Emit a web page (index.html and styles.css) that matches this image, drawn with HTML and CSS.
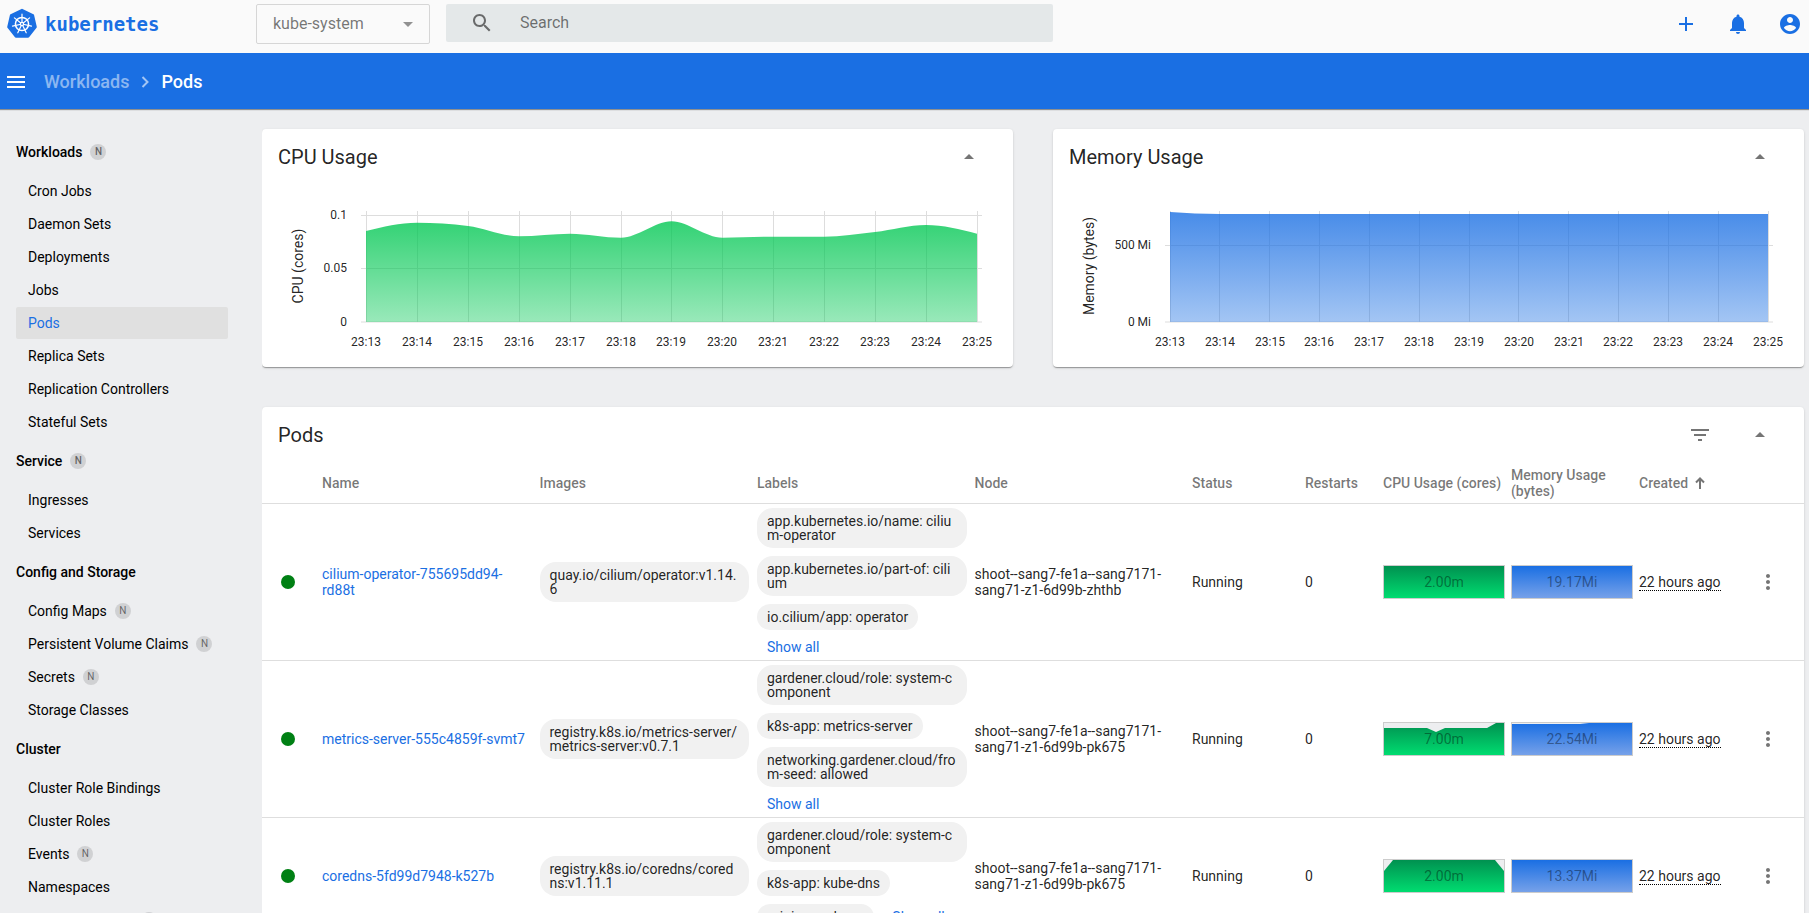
FILE: index.html
```html
<!DOCTYPE html>
<html lang="en">

<head>
    <meta charset="UTF-8">
    <meta name="viewport" content="width=device-width, initial-scale=1.0">
    <title>Kubernetes Dashboard</title>
    <link rel="stylesheet" href="styles.css">
</head>

<body>
    <header class="topbar">
        <a href="#" class="logo">
            <svg width="32" height="32" viewBox="0 0 32 32">
                <path d="M16 2L26.9 7.3L29.6 19.1L22.1 28.6H9.9L2.4 19.1L5.1 7.3Z" fill="#1a6fe3" stroke="#1a6fe3" stroke-width="2.4" stroke-linejoin="round" />
                <circle cx="16" cy="16" r="6.6" fill="none" stroke="#fff" stroke-width="1.5" />
                <path d="M16 16V6.2M16 16L23.6 9.9M16 16L25.5 18.2M16 16L20.2 24.8M16 16L11.8 24.8M16 16L6.5 18.2M16 16L8.4 9.9" stroke="#fff" stroke-width="1.2" stroke-linecap="round" />
                <circle cx="16" cy="16" r="2.2" fill="#fff" />
                <circle cx="16" cy="16" r="0.9" fill="#1a6fe3" />
            </svg>
            <span class="logo-text">kubernetes</span>
        </a>
        <div class="namespace">
            <select class="namespace-select" aria-label="Namespace">
                <option>kube-system</option>
            </select>
            <svg class="namespace-arrow" width="10" height="5" viewBox="0 0 10 5"><path d="M0 0h10L5 5z" /></svg>
        </div>
        <form class="search">
            <svg class="icon" viewBox="0 0 24 24"><path d="M15.5 14h-.79l-.28-.27C15.41 12.59 16 11.11 16 9.5 16 5.91 13.09 3 9.5 3S3 5.91 3 9.5 5.91 16 9.5 16c1.61 0 3.09-.59 4.23-1.57l.27.28v.79l5 4.99L20.49 19l-4.99-5zm-6 0C7.01 14 5 11.99 5 9.5S7.01 5 9.5 5 14 7.01 14 9.5 11.99 14 9.5 14z" /></svg>
            <input type="text" class="search-input" placeholder="Search" aria-label="Search">
        </form>
        <div class="actions">
            <button class="icon-btn" aria-label="Create">
                <svg class="icon" viewBox="0 0 24 24"><path d="M19 13h-6v6h-2v-6H5v-2h6V5h2v6h6v2z" /></svg>
            </button>
            <button class="icon-btn" aria-label="Notifications">
                <svg class="icon" viewBox="0 0 24 24"><path d="M12 22c1.1 0 2-.9 2-2h-4c0 1.1.89 2 2 2zm6-6v-5c0-3.07-1.64-5.64-4.5-6.32V4c0-.83-.67-1.5-1.5-1.5s-1.5.67-1.5 1.5v.68C7.63 5.36 6 7.92 6 11v5l-2 2v1h16v-1l-2-2z" /></svg>
            </button>
            <button class="icon-btn" aria-label="Account">
                <svg class="icon" viewBox="0 0 24 24"><path d="M12 2C6.48 2 2 6.48 2 12s4.48 10 10 10 10-4.48 10-10S17.52 2 12 2zm0 3c1.66 0 3 1.34 3 3s-1.34 3-3 3-3-1.34-3-3 1.34-3 3-3zm0 14.2c-2.5 0-4.71-1.28-6-3.22.03-1.99 4-3.08 6-3.08 1.99 0 5.97 1.09 6 3.08-1.29 1.94-3.5 3.22-6 3.22z" /></svg>
            </button>
        </div>
    </header>

    <nav class="breadcrumbs">
        <button class="menu-btn" aria-label="Toggle menu">
            <svg class="icon" viewBox="0 0 24 24"><path d="M3 18h18v-2H3v2zm0-5h18v-2H3v2zm0-7v2h18V6H3z" /></svg>
        </button>
        <a href="#" class="crumb">Workloads</a>
        <svg class="crumb-arrow" width="8" height="12" viewBox="0 0 8 12"><path d="M1.5 1l5 5-5 5" /></svg>
        <span class="crumb-current">Pods</span>
    </nav>

    <div class="layout">
        <nav class="sidebar">
            <a href="#" class="nav-group">Workloads <span class="badge">N</span></a>
            <a href="#" class="nav-item">Cron Jobs</a>
            <a href="#" class="nav-item">Daemon Sets</a>
            <a href="#" class="nav-item">Deployments</a>
            <a href="#" class="nav-item">Jobs</a>
            <a href="#" class="nav-item active">Pods</a>
            <a href="#" class="nav-item">Replica Sets</a>
            <a href="#" class="nav-item">Replication Controllers</a>
            <a href="#" class="nav-item">Stateful Sets</a>
            <a href="#" class="nav-group">Service <span class="badge">N</span></a>
            <a href="#" class="nav-item">Ingresses</a>
            <a href="#" class="nav-item">Services</a>
            <a href="#" class="nav-group">Config and Storage</a>
            <a href="#" class="nav-item">Config Maps <span class="badge">N</span></a>
            <a href="#" class="nav-item">Persistent Volume Claims <span class="badge">N</span></a>
            <a href="#" class="nav-item">Secrets <span class="badge">N</span></a>
            <a href="#" class="nav-item">Storage Classes</a>
            <a href="#" class="nav-group">Cluster</a>
            <a href="#" class="nav-item">Cluster Role Bindings</a>
            <a href="#" class="nav-item">Cluster Roles</a>
            <a href="#" class="nav-item">Events <span class="badge">N</span></a>
            <a href="#" class="nav-item">Namespaces</a>
            <a href="#" class="nav-item">Network Policies <span class="badge">N</span></a>
        </nav>

        <main class="content">
            <div class="graphs">
                <section class="card">
                    <div class="card-header">
                        <h2>CPU Usage</h2>
                        <button class="card-btn" aria-label="Collapse">
                            <svg class="icon" viewBox="0 0 24 24"><path d="M7 14l5-5 5 5z" /></svg>
                        </button>
                    </div>
                    <svg class="graph" viewBox="0 0 751 182">
                        <defs>
                            <linearGradient id="cpu-fill" x1="0" y1="0" x2="0" y2="1">
                                <stop offset="0" stop-color="#00c752" stop-opacity="0.8" />
                                <stop offset="1" stop-color="#00c752" stop-opacity="0.4" />
                            </linearGradient>
                        </defs>
                        <path class="grid-line" d="M99 30.5H720M99 83.5H720M99 137H720" />
                        <path class="grid-line" d="M104.5 26V137M155.5 26V137M206.5 26V137M257.5 26V137M308.5 26V137M359.5 26V137M409.5 26V137M460.5 26V137M511.5 26V137M562.5 26V137M613.5 26V137M664.5 26V137M715.5 26V137" />
                        <path fill="url(#cpu-fill)" d="M104 46C121 41.9 138 37.7 155 37.7C172 37.7 189 38.8 206 41C223 43.2 240 51.3 257 51.3C274 51.3 291 48.7 308 48.7C325 48.7 342 52.7 359 52.7C376 52.7 393 36.3 409.5 36.3C426 36.3 443 52.7 460.5 52.7C477 52.7 494 51.7 511 51.7H562C579 51.7 596 49 613 47C630 45 647 40 664 40C681 40 698 44.4 715 48.7V137H104Z" />
                        <text class="axis-title" transform="translate(41 81) rotate(-90)">CPU (cores)</text>
                        <g class="tick-y">
                            <text x="85" y="34">0.1</text>
                            <text x="85" y="87">0.05</text>
                            <text x="85" y="141">0</text>
                        </g>
                        <g class="tick-x">
                            <text x="104" y="161">23:13</text>
                            <text x="155" y="161">23:14</text>
                            <text x="206" y="161">23:15</text>
                            <text x="257" y="161">23:16</text>
                            <text x="308" y="161">23:17</text>
                            <text x="359" y="161">23:18</text>
                            <text x="409" y="161">23:19</text>
                            <text x="460" y="161">23:20</text>
                            <text x="511" y="161">23:21</text>
                            <text x="562" y="161">23:22</text>
                            <text x="613" y="161">23:23</text>
                            <text x="664" y="161">23:24</text>
                            <text x="715" y="161">23:25</text>
                        </g>
                    </svg>
                </section>

                <section class="card">
                    <div class="card-header">
                        <h2>Memory Usage</h2>
                        <button class="card-btn" aria-label="Collapse">
                            <svg class="icon" viewBox="0 0 24 24"><path d="M7 14l5-5 5 5z" /></svg>
                        </button>
                    </div>
                    <svg class="graph" viewBox="0 0 751 182">
                        <defs>
                            <linearGradient id="mem-fill" x1="0" y1="0" x2="0" y2="1">
                                <stop offset="0" stop-color="#1a6fe3" stop-opacity="0.8" />
                                <stop offset="1" stop-color="#1a6fe3" stop-opacity="0.4" />
                            </linearGradient>
                        </defs>
                        <path class="grid-line" d="M112 60.5H720M112 137H720" />
                        <path class="grid-line" d="M117.5 26V137M166.5 26V137M216.5 26V137M266.5 26V137M316.5 26V137M366.5 26V137M416.5 26V137M465.5 26V137M515.5 26V137M565.5 26V137M615.5 26V137M665.5 26V137M715.5 26V137" />
                        <path fill="url(#mem-fill)" d="M117 27C134 28 150 29 167 29H715V137H117Z" />
                        <text class="axis-title" transform="translate(41 81) rotate(-90)">Memory (bytes)</text>
                        <g class="tick-y">
                            <text x="98" y="64">500 Mi</text>
                            <text x="98" y="141">0 Mi</text>
                        </g>
                        <g class="tick-x">
                            <text x="117" y="161">23:13</text>
                            <text x="167" y="161">23:14</text>
                            <text x="217" y="161">23:15</text>
                            <text x="266" y="161">23:16</text>
                            <text x="316" y="161">23:17</text>
                            <text x="366" y="161">23:18</text>
                            <text x="416" y="161">23:19</text>
                            <text x="466" y="161">23:20</text>
                            <text x="516" y="161">23:21</text>
                            <text x="565" y="161">23:22</text>
                            <text x="615" y="161">23:23</text>
                            <text x="665" y="161">23:24</text>
                            <text x="715" y="161">23:25</text>
                        </g>
                    </svg>
                </section>
            </div>

            <section class="card">
                <div class="card-header">
                    <h2>Pods</h2>
                    <button class="card-btn filter-btn" aria-label="Filter">
                        <svg class="icon" viewBox="0 0 24 24"><path d="M10 18h4v-2h-4v2zM3 6v2h18V6H3zm3 7h12v-2H6v2z" /></svg>
                    </button>
                    <button class="card-btn" aria-label="Collapse">
                        <svg class="icon" viewBox="0 0 24 24"><path d="M7 14l5-5 5 5z" /></svg>
                    </button>
                </div>
                <table class="pods">
                    <colgroup>
                        <col class="col-state">
                        <col>
                        <col>
                        <col>
                        <col>
                        <col class="col-status">
                        <col class="col-restarts">
                        <col class="col-usage">
                        <col class="col-usage">
                        <col class="col-created">
                        <col class="col-menu">
                    </colgroup>
                    <thead>
                        <tr>
                            <th></th>
                            <th>Name</th>
                            <th>Images</th>
                            <th>Labels</th>
                            <th>Node</th>
                            <th>Status</th>
                            <th>Restarts</th>
                            <th>CPU Usage (cores)</th>
                            <th>Memory Usage (bytes)</th>
                            <th>
                                <span class="sorted">Created
                                    <svg width="10" height="12" viewBox="0 0 10 12"><path d="M5 12V1.5M1 5.5l4-4 4 4" /></svg>
                                </span>
                            </th>
                            <th></th>
                        </tr>
                    </thead>
                    <tbody>
                        <tr>
                            <td><span class="dot"></span></td>
                            <td><a href="#">cilium-operator-755695dd94-rd88t</a></td>
                            <td class="chip-cell"><div class="chips"><span class="chip">quay.io/cilium/operator:v1.14.6</span></div></td>
                            <td class="chip-cell">
                                <div class="chips">
                                    <span class="chip">app.kubernetes.io/name: cilium-operator</span>
                                    <span class="chip">app.kubernetes.io/part-of: cilium</span>
                                    <span class="chip">io.cilium/app: operator</span>
                                    <a href="#" class="show-all">Show all</a>
                                </div>
                            </td>
                            <td>shoot--sang7-fe1a--sang7171-sang71-z1-6d99b-zhthb</td>
                            <td>Running</td>
                            <td>0</td>
                            <td>
                                <div class="spark">
                                    <svg viewBox="0 0 120 32" preserveAspectRatio="none">
                                        <!-- gradients shared by all the sparklines -->
                                        <defs>
                                            <linearGradient id="spark-cpu" gradientUnits="userSpaceOnUse" x1="0" y1="0" x2="0" y2="32">
                                                <stop offset="0" stop-color="#009150" />
                                                <stop offset="1" stop-color="#00dc70" />
                                            </linearGradient>
                                            <linearGradient id="spark-mem" gradientUnits="userSpaceOnUse" x1="0" y1="0" x2="0" y2="32">
                                                <stop offset="0" stop-color="#1a6fe3" />
                                                <stop offset="1" stop-color="#76a1e9" />
                                            </linearGradient>
                                        </defs>
                                        <path fill="url(#spark-cpu)" d="M0 0H120V32H0Z" />
                                    </svg>
                                    <span class="spark-value">2.00m</span>
                                </div>
                            </td>
                            <td>
                                <div class="spark">
                                    <svg viewBox="0 0 120 32" preserveAspectRatio="none"><path fill="url(#spark-mem)" d="M0 0H120V32H0Z" /></svg>
                                    <span class="spark-value">19.17Mi</span>
                                </div>
                            </td>
                            <td><span class="age">22 hours ago</span></td>
                            <td>
                                <button class="row-menu" aria-label="Pod actions">
                                    <svg class="icon" viewBox="0 0 24 24"><path d="M12 8c1.1 0 2-.9 2-2s-.9-2-2-2-2 .9-2 2 .9 2 2 2zm0 2c-1.1 0-2 .9-2 2s.9 2 2 2 2-.9 2-2-.9-2-2-2zm0 6c-1.1 0-2 .9-2 2s.9 2 2 2 2-.9 2-2-.9-2-2-2z" /></svg>
                                </button>
                            </td>
                        </tr>
                        <tr>
                            <td><span class="dot"></span></td>
                            <td><a href="#">metrics-server-555c4859f-svmt7</a></td>
                            <td class="chip-cell"><div class="chips"><span class="chip">registry.k8s.io/metrics-server/metrics-server:v0.7.1</span></div></td>
                            <td class="chip-cell">
                                <div class="chips">
                                    <span class="chip">gardener.cloud/role: system-component</span>
                                    <span class="chip">k8s-app: metrics-server</span>
                                    <span class="chip">networking.gardener.cloud/from-seed: allowed</span>
                                    <a href="#" class="show-all">Show all</a>
                                </div>
                            </td>
                            <td>shoot--sang7-fe1a--sang7171-sang71-z1-6d99b-pk675</td>
                            <td>Running</td>
                            <td>0</td>
                            <td>
                                <div class="spark">
                                    <svg viewBox="0 0 120 32" preserveAspectRatio="none"><path fill="url(#spark-cpu)" d="M0 5H43L52 9L61 5H103L112 0H120V32H0Z" /></svg>
                                    <span class="spark-value">7.00m</span>
                                </div>
                            </td>
                            <td>
                                <div class="spark">
                                    <svg viewBox="0 0 120 32" preserveAspectRatio="none"><path fill="url(#spark-mem)" d="M0 1H68L77 0H120V32H0Z" /></svg>
                                    <span class="spark-value">22.54Mi</span>
                                </div>
                            </td>
                            <td><span class="age">22 hours ago</span></td>
                            <td>
                                <button class="row-menu" aria-label="Pod actions">
                                    <svg class="icon" viewBox="0 0 24 24"><path d="M12 8c1.1 0 2-.9 2-2s-.9-2-2-2-2 .9-2 2 .9 2 2 2zm0 2c-1.1 0-2 .9-2 2s.9 2 2 2 2-.9 2-2-.9-2-2-2zm0 6c-1.1 0-2 .9-2 2s.9 2 2 2 2-.9 2-2-.9-2-2-2z" /></svg>
                                </button>
                            </td>
                        </tr>
                        <tr>
                            <td><span class="dot"></span></td>
                            <td><a href="#">coredns-5fd99d7948-k527b</a></td>
                            <td class="chip-cell"><div class="chips"><span class="chip">registry.k8s.io/coredns/coredns:v1.11.1</span></div></td>
                            <td class="chip-cell">
                                <div class="chips">
                                    <span class="chip">gardener.cloud/role: system-component</span>
                                    <span class="chip">k8s-app: kube-dns</span>
                                    <span class="chip">origin: gardener</span>
                                    <a href="#" class="show-all">Show all</a>
                                </div>
                            </td>
                            <td>shoot--sang7-fe1a--sang7171-sang71-z1-6d99b-pk675</td>
                            <td>Running</td>
                            <td>0</td>
                            <td>
                                <div class="spark">
                                    <svg viewBox="0 0 120 32" preserveAspectRatio="none"><path fill="url(#spark-cpu)" d="M0 11L9 0H111L120 11V32H0Z" /></svg>
                                    <span class="spark-value">2.00m</span>
                                </div>
                            </td>
                            <td>
                                <div class="spark">
                                    <svg viewBox="0 0 120 32" preserveAspectRatio="none"><path fill="url(#spark-mem)" d="M0 0H120V32H0Z" /></svg>
                                    <span class="spark-value">13.37Mi</span>
                                </div>
                            </td>
                            <td><span class="age">22 hours ago</span></td>
                            <td>
                                <button class="row-menu" aria-label="Pod actions">
                                    <svg class="icon" viewBox="0 0 24 24"><path d="M12 8c1.1 0 2-.9 2-2s-.9-2-2-2-2 .9-2 2 .9 2 2 2zm0 2c-1.1 0-2 .9-2 2s.9 2 2 2 2-.9 2-2-.9-2-2-2zm0 6c-1.1 0-2 .9-2 2s.9 2 2 2 2-.9 2-2-.9-2-2-2z" /></svg>
                                </button>
                            </td>
                        </tr>
                    </tbody>
                </table>
            </section>
        </main>
    </div>
</body>

</html>
```
FILE: styles.css
```css
* {
    box-sizing: border-box;
}

body {
    font-family: Roboto, "Liberation Sans", sans-serif;
    font-size: 14px;
    line-height: 16px;
    color: rgba(0, 0, 0, 0.87);
    background-color: #edeef0;
    margin: 0;
    height: 100vh;
    display: flex;
    flex-direction: column;
    overflow: hidden;
}

a {
    color: #1a6fe3;
    text-decoration: none;
}

button {
    display: flex;
    align-items: center;
    justify-content: center;
    background: none;
    border: none;
    padding: 0;
    color: inherit;
    cursor: pointer;
}

.icon {
    width: 24px;
    height: 24px;
    fill: currentColor;
    flex-shrink: 0;
}

/* Top bar */
.topbar {
    display: flex;
    align-items: center;
    flex-shrink: 0;
    height: 53px;
    padding: 0 7px 6px 6px;
    background-color: #fafafa;
}

.logo {
    display: flex;
    align-items: center;
    gap: 7px;
    width: 250px;
}

.logo-text {
    font-family: "DejaVu Sans Mono", monospace;
    font-size: 19px;
    font-weight: bold;
    line-height: 24px;
}

.namespace {
    position: relative;
}

.namespace-select {
    appearance: none;
    width: 174px;
    height: 40px;
    padding: 0 40px 0 16px;
    border: 1px solid #d6d6d6;
    border-radius: 2px;
    background-color: transparent;
    color: rgba(0, 0, 0, 0.54);
    font-family: inherit;
    font-size: 16px;
}

.namespace-arrow {
    position: absolute;
    right: 17px;
    top: 18px;
    fill: rgba(0, 0, 0, 0.42);
    pointer-events: none;
}

.search {
    display: flex;
    align-items: center;
    gap: 26px;
    width: 607px;
    height: 38px;
    margin: 0 0 2px 16px;
    padding-left: 24px;
    border-radius: 2px;
    background-color: #e4e8e9;
    color: rgba(0, 0, 0, 0.54);
}

.search-input {
    flex: 1;
    border: none;
    outline: none;
    padding: 0;
    background: none;
    font-family: inherit;
    font-size: 16px;
}

.search-input::placeholder {
    color: rgba(0, 0, 0, 0.54);
}

.actions {
    display: flex;
    gap: 28px;
    margin-left: auto;
    color: #1a6fe3;
}

/* Breadcrumbs */
.breadcrumbs {
    display: flex;
    align-items: center;
    flex-shrink: 0;
    height: 56px;
    padding: 2px 4px 0;
    background-color: #1a6fe3;
    color: #fff;
    font-size: 18px;
    font-weight: 500;
    line-height: 24px;
    box-shadow: 0 1px 1px rgba(0, 0, 0, 0.4);
}

.menu-btn {
    margin-right: 16px;
}

.crumb {
    color: rgba(255, 255, 255, 0.5);
}

.crumb-arrow {
    margin: 0 12px;
    fill: none;
    stroke: rgba(255, 255, 255, 0.6);
    stroke-width: 2;
}

.layout {
    display: flex;
    flex: 1;
    min-height: 0;
}

/* Sidebar */
.sidebar {
    width: 262px;
    flex-shrink: 0;
    padding: 20px 34px 0 16px;
    overflow: hidden;
}

.nav-group,
.nav-item {
    display: flex;
    align-items: center;
    gap: 8px;
    color: #000;
}

.nav-group {
    height: 45px;
    font-weight: 500;
}

.nav-item {
    height: 32px;
    margin-top: 1px;
    padding-left: 12px;
    border-radius: 2px;
}

.nav-item.active {
    background-color: #e0e0e0;
    color: #1a6fe3;
}

.badge {
    width: 16px;
    height: 16px;
    border-radius: 50%;
    background-color: #d0d1d3;
    color: rgba(0, 0, 0, 0.54);
    font-size: 10px;
    text-align: center;
}

/* Content */
.content {
    flex: 1;
    min-width: 0;
    padding: 20px 5px 0 0;
    overflow: hidden;
}

.graphs {
    display: grid;
    grid-template-columns: 1fr 1fr;
    gap: 40px;
    margin-bottom: 40px;
}

.card {
    background-color: #fff;
    border-radius: 4px;
    box-shadow: 0 2px 1px -1px rgba(0, 0, 0, 0.2), 0 1px 1px rgba(0, 0, 0, 0.14), 0 1px 3px rgba(0, 0, 0, 0.12);
}

.card-header {
    display: flex;
    align-items: center;
    height: 56px;
    padding: 0 24px 0 16px;
}

.card-header h2 {
    flex: 1;
    margin: 0;
    font-size: 20px;
    font-weight: 400;
    line-height: 24px;
}

.card-btn {
    width: 40px;
    height: 40px;
    color: rgba(0, 0, 0, 0.54);
}

.filter-btn {
    margin-right: 20px;
}

.graph {
    display: block;
    width: 100%;
}

.graph text {
    font-size: 12px;
    fill: rgba(0, 0, 0, 0.87);
}

.graph .axis-title {
    font-size: 14px;
    text-anchor: middle;
}

.tick-y {
    text-anchor: end;
}

.tick-x {
    text-anchor: middle;
}

.grid-line {
    fill: none;
    stroke: #ddd;
}

/* Pods table */
.pods {
    width: 100%;
    table-layout: fixed;
    border-collapse: separate;
    border-spacing: 0;
}

.col-state {
    width: 60px;
}

.col-status {
    width: 113px;
}

.col-restarts {
    width: 78px;
}

.col-usage {
    width: 128px;
}

.col-created {
    width: 109px;
}

.col-menu {
    width: 56px;
}

.pods th,
.pods td {
    padding: 0 6px 0 0;
    border-bottom: 1px solid #dedede;
    text-align: left;
    vertical-align: middle;
}

.pods th {
    height: 41px;
    color: rgba(0, 0, 0, 0.54);
    font-weight: 500;
}

.pods .chip-cell {
    padding-right: 8px;
}

.sorted {
    display: flex;
    align-items: center;
    gap: 7px;
}

.sorted svg {
    fill: none;
    stroke: currentColor;
    stroke-width: 2;
}

.dot {
    display: block;
    width: 14px;
    height: 14px;
    margin-left: 19px;
    border-radius: 50%;
    background-color: #008014;
}

.chips {
    display: flex;
    flex-wrap: wrap;
    align-items: center;
    column-gap: 8px;
}

.chip {
    margin: 4px 0;
    padding: 6px 10px;
    border-radius: 16px;
    background-color: #f1f1f1;
    line-height: 14px;
    word-break: break-all;
}

.show-all {
    padding: 5px 10px;
}

.spark {
    position: relative;
    height: 34px;
    border: 1px solid #ccc;
    background-color: #edeef0;
}

.spark svg {
    display: block;
    width: 100%;
    height: 100%;
}

.spark-value {
    position: absolute;
    inset: 0;
    color: rgba(0, 0, 0, 0.4);
    line-height: 32px;
    text-align: center;
}

.age {
    border-bottom: 1px dotted #000;
    line-height: 14px;
}

.row-menu {
    width: 40px;
    height: 40px;
    color: rgba(0, 0, 0, 0.54);
}
```
